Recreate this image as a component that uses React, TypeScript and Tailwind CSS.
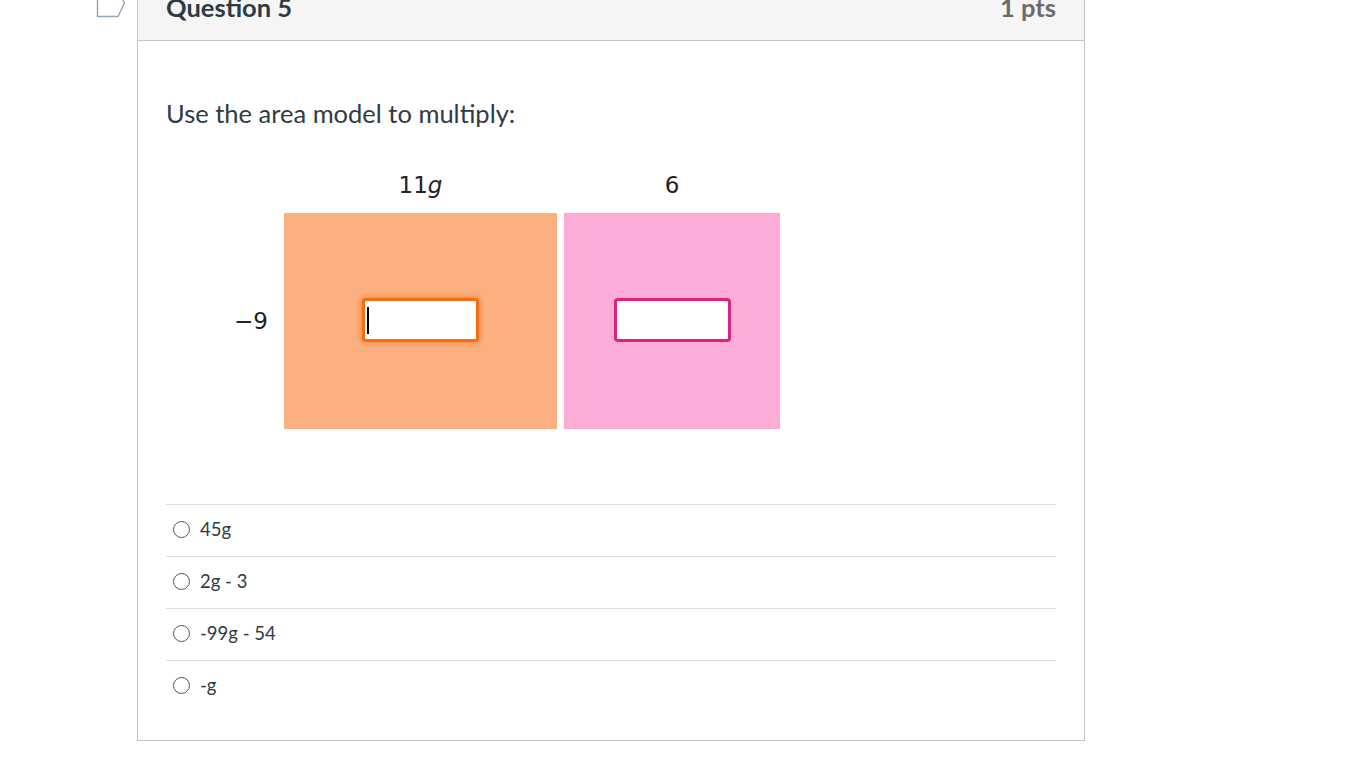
import React from "react";

export default function App() {
  const options = ["45g", "2g - 3", "-99g - 54", "-g"];
  return (
    <div className="w-[1366px] h-[768px] overflow-hidden bg-white" style={{ fontFamily: "Lato, 'Noto Sans', sans-serif" }}>
      <div className="flex pl-[96px] -mt-[21px]">
        <div className="w-[41px] shrink-0 pt-[10px]">
          <svg width="32" height="30" viewBox="0 0 32 30" className="block">
            <path d="M1.5 1 H22 L28.5 14 L22 27.5 H1.5 Z" fill="none" stroke="#94a6b9" strokeWidth="1.5" strokeLinejoin="round" />
          </svg>
        </div>
        <div className="w-[948px] border border-[#c4c4c4] text-[#2d3b45]">
          <div className="bg-[#f5f5f5] border-b border-[#c4c4c4] flex justify-between px-[28px] pt-[15px] pb-[21px]">
            <div className="text-[25.5px] leading-[24px] font-bold text-[#2d3b45]">Question 5</div>
            <div className="text-[25.5px] leading-[24px] font-bold text-[#6b6b6b]">1 pts</div>
          </div>
          <div className="px-[28px] pt-[54px] pb-[28px]">
            <p className="text-[25.5px] leading-[36px]">Use the area model to multiply:</p>
            <div className="mt-[36px] flex" style={{ fontFamily: "'DejaVu Sans', Verdana, sans-serif" }}>
              <div className="w-[118px] shrink-0 flex flex-col">
                <div className="h-[46px]" />
                <div className="h-[216px] flex items-center justify-end pr-[16px] text-[23px] text-[#222]">−9</div>
              </div>
              <div className="flex flex-col w-[273px]">
                <div className="h-[36px] flex items-center justify-center text-[23px] text-[#222]">
                  11<span className="italic">g</span>
                </div>
                <div className="h-[10px]" />
                <div className="h-[216px] bg-[#fcb07f] flex items-center justify-center">
                  <div className="relative mb-[3px] w-[117px] h-[44px] bg-white border-[3px] border-[#f26d14] rounded-[4px] shadow-[0_0_4px_2px_rgba(245,120,40,0.6)]">
                    <div className="absolute left-[2px] top-[6px] w-[2px] h-[27px] bg-black" />
                  </div>
                </div>
              </div>
              <div className="w-[7px]" />
              <div className="flex flex-col w-[216px]">
                <div className="h-[36px] flex items-center justify-center text-[23px] text-[#222]">6</div>
                <div className="h-[10px]" />
                <div className="h-[216px] bg-[#fdabd7] flex items-center justify-center">
                  <div className="mb-[3px] w-[117px] h-[44px] bg-white border-[3px] border-[#e0207f] rounded-[4px]" />
                </div>
              </div>
            </div>
            <div className="mt-[75px]">
              {options.map((o) => (
                <div key={o} className="border-t border-[#dcdcdc] h-[52px] flex items-center pl-[7px] pb-[2px]">
                  <span className="w-[17px] h-[17px] rounded-full border border-[#555] bg-white shrink-0" />
                  <span className="ml-[10px] text-[18.5px] text-[#2d3b45]">{o}</span>
                </div>
              ))}
            </div>
          </div>
        </div>
      </div>
    </div>
  );
}
